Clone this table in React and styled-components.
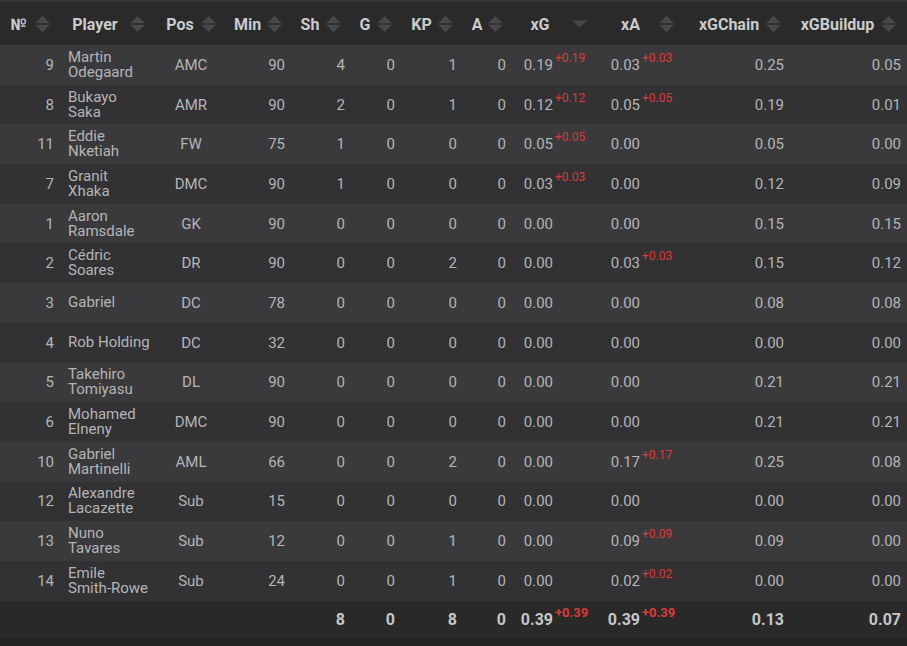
import React from "react";
import styled, { createGlobalStyle } from "styled-components";

const Global = createGlobalStyle`
  html, body { margin: 0; padding: 0; background: #232324; }
  body { font-family: Roboto, "Liberation Sans", sans-serif; }
`;

const COLS = [
  { key: "no", label: "№", w: 60, align: "right", gap: 8 },
  { key: "name", label: "Player", w: 97, align: "left", gap: 12 },
  { key: "pos", label: "Pos", w: 68, align: "center", gap: 7 },
  { key: "min", label: "Min", w: 66, align: "right", gap: 6 },
  { key: "sh", label: "Sh", w: 60, align: "right", gap: 7 },
  { key: "g", label: "G", w: 50, align: "right", gap: 7 },
  { key: "kp", label: "KP", w: 62, align: "right", gap: 6 },
  { key: "a", label: "A", w: 49, align: "right", gap: 6 },
  { key: "xg", label: "xG", w: 93, align: "left", gap: 22, numW: 41, single: true },
  { key: "xa", label: "xA", w: 85, align: "left", gap: 19, numW: 35 },
  { key: "chain", label: "xGChain", w: 100, align: "right", gap: 7 },
  { key: "build", label: "xGBuildup", w: 117, align: "right", gap: 7 },
];

const ROWS = [
  [9, "Martin Odegaard", "AMC", 90, 4, 0, 1, 0, "0.19", "+0.19", "0.03", "+0.03", "0.25", "0.05"],
  [8, "Bukayo Saka", "AMR", 90, 2, 0, 1, 0, "0.12", "+0.12", "0.05", "+0.05", "0.19", "0.01"],
  [11, "Eddie Nketiah", "FW", 75, 1, 0, 0, 0, "0.05", "+0.05", "0.00", "", "0.05", "0.00"],
  [7, "Granit Xhaka", "DMC", 90, 1, 0, 0, 0, "0.03", "+0.03", "0.00", "", "0.12", "0.09"],
  [1, "Aaron Ramsdale", "GK", 90, 0, 0, 0, 0, "0.00", "", "0.00", "", "0.15", "0.15"],
  [2, "Cédric Soares", "DR", 90, 0, 0, 2, 0, "0.00", "", "0.03", "+0.03", "0.15", "0.12"],
  [3, "Gabriel", "DC", 78, 0, 0, 0, 0, "0.00", "", "0.00", "", "0.08", "0.08"],
  [4, "Rob Holding", "DC", 32, 0, 0, 0, 0, "0.00", "", "0.00", "", "0.00", "0.00"],
  [5, "Takehiro Tomiyasu", "DL", 90, 0, 0, 0, 0, "0.00", "", "0.00", "", "0.21", "0.21"],
  [6, "Mohamed Elneny", "DMC", 90, 0, 0, 0, 0, "0.00", "", "0.00", "", "0.21", "0.21"],
  [10, "Gabriel Martinelli", "AML", 66, 0, 0, 2, 0, "0.00", "", "0.17", "+0.17", "0.25", "0.08"],
  [12, "Alexandre Lacazette", "Sub", 15, 0, 0, 0, 0, "0.00", "", "0.00", "", "0.00", "0.00"],
  [13, "Nuno Tavares", "Sub", 12, 0, 0, 1, 0, "0.00", "", "0.09", "+0.09", "0.09", "0.00"],
  [14, "Emile Smith-Rowe", "Sub", 24, 0, 0, 1, 0, "0.00", "", "0.02", "+0.02", "0.00", "0.00"],
];

const TOTAL = ["", "", "", "", 8, 0, 8, 0, "0.39", "+0.39", "0.39", "+0.39", "0.13", "0.07"];

const Table = styled.table`
  width: 907px;
  table-layout: fixed;
  border-collapse: collapse;
  border-spacing: 0;
  border-bottom: 6px solid #232324;
`;

const HeadRow = styled.tr`
  height: 44px;
  background: #2a2a2b;
  border-top: 2px solid #333335;
`;

const HeadCell = styled.th`
  padding: 0;
  font-weight: 700;
  font-size: 16px;
  color: #cbcbcb;
  vertical-align: middle;
`;

const HeadInner = styled.div`
  display: flex;
  align-items: center;
  justify-content: center;
  gap: ${(p) => p.$gap}px;
  padding-top: 1px;
`;

const BodyRow = styled.tr`
  height: 39.7px;
  background: ${(p) => (p.$odd ? "#3a3a3c" : "#323234")};
`;

const FootRow = styled.tr`
  height: 40px;
  background: #29292a;
`;

const Cell = styled.td`
  padding: 0 ${(p) => (p.$align === "right" ? "6px" : "0")} 0
    ${(p) => (p.$align === "left" && !p.$num ? "8px" : "0")};
  text-align: ${(p) => p.$align};
  font-size: ${(p) => (p.$total ? "16px" : "15px")};
  font-weight: ${(p) => (p.$total ? 700 : 400)};
  color: ${(p) => (p.$total ? "#c6c6c6" : "#b4b4b6")};
  vertical-align: middle;
  white-space: nowrap;
`;

const NameCell = styled(Cell)`
  white-space: normal;
  line-height: 15px;
  padding-right: 4px;
`;

const Word = styled.span`
  white-space: nowrap;
`;

const XWrap = styled.div`
  display: flex;
  align-items: center;
`;

const XNum = styled.span`
  display: inline-block;
  width: ${(p) => p.$w}px;
  text-align: right;
`;

const Sup = styled.span`
  color: #d83b38;
  font-size: ${(p) => (p.$total ? "13px" : "12px")};
  font-weight: ${(p) => (p.$total ? 700 : 400)};
  margin-left: 2px;
  position: relative;
  top: -7px;
`;

const SortIcon = ({ single }) =>
  single ? (
    <svg width="15" height="16" viewBox="0 0 15 16" style={{ display: "block" }}>
      <polygon points="0,4.5 15,4.5 7.5,11.5" fill="#48484a" />
    </svg>
  ) : (
    <svg width="15" height="16" viewBox="0 0 15 16" style={{ display: "block" }}>
      <polygon points="0,7.3 7.5,0 15,7.3" fill="#48484a" />
      <polygon points="0,8.7 15,8.7 7.5,16" fill="#48484a" />
    </svg>
  );

function XCell({ col, value, sup, total }) {
  return (
    <Cell $align="left" $num $total={total}>
      <XWrap>
        <XNum $w={col.numW}>{value}</XNum>
        {sup ? <Sup $total={total}>{sup}</Sup> : null}
      </XWrap>
    </Cell>
  );
}

function Name({ text }) {
  const words = String(text).split(" ");
  return words.map((w, i) => (
    <React.Fragment key={i}>
      <Word>{w}</Word>
      {i < words.length - 1 ? " " : null}
    </React.Fragment>
  ));
}

function DataRow({ row, odd, total }) {
  const [no, name, pos, min, sh, g, kp, a, xg, xgs, xa, xas, chain, build] = row;
  const Row = total ? FootRow : BodyRow;
  return (
    <Row $odd={odd}>
      <Cell $align="right" $total={total}>{no}</Cell>
      <NameCell $align="left" $total={total}>
        <Name text={name} />
      </NameCell>
      <Cell $align="center" $total={total}>{pos}</Cell>
      <Cell $align="right" $total={total}>{min}</Cell>
      <Cell $align="right" $total={total}>{sh}</Cell>
      <Cell $align="right" $total={total}>{g}</Cell>
      <Cell $align="right" $total={total}>{kp}</Cell>
      <Cell $align="right" $total={total}>{a}</Cell>
      <XCell col={COLS[8]} value={xg} sup={xgs} total={total} />
      <XCell col={COLS[9]} value={xa} sup={xas} total={total} />
      <Cell $align="right" $total={total}>{chain}</Cell>
      <Cell $align="right" $total={total}>{build}</Cell>
    </Row>
  );
}

export default function App() {
  return (
    <>
      <Global />
      <Table>
        <colgroup>
          {COLS.map((c) => (
            <col key={c.key} style={{ width: c.w }} />
          ))}
        </colgroup>
        <thead>
          <HeadRow>
            {COLS.map((c) => (
              <HeadCell key={c.key}>
                <HeadInner $gap={c.gap}>
                  <span>{c.label}</span>
                  <SortIcon single={c.single} />
                </HeadInner>
              </HeadCell>
            ))}
          </HeadRow>
        </thead>
        <tbody>
          {ROWS.map((r, i) => (
            <DataRow key={r[0]} row={r} odd={i % 2 === 0} />
          ))}
        </tbody>
        <tfoot>
          <DataRow row={TOTAL} total />
        </tfoot>
      </Table>
    </>
  );
}
